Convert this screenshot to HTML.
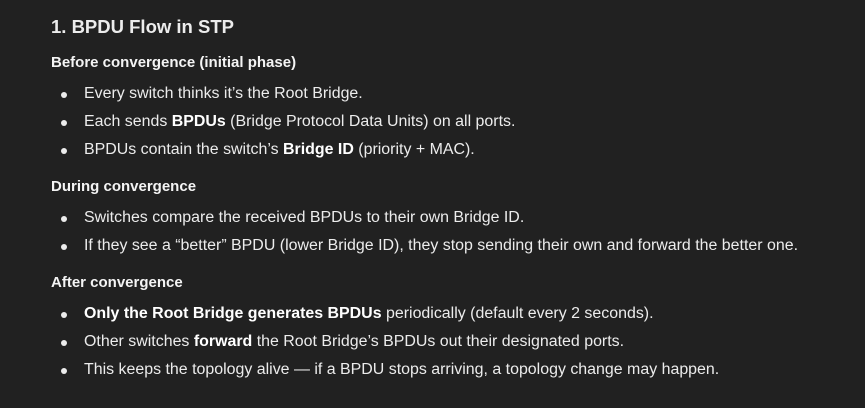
<!DOCTYPE html>
<html><head><style>
body{margin:0;background:#212121;width:865px;height:408px;overflow:hidden;font-family:"Liberation Sans",sans-serif;color:#ececec;position:relative}
.t{position:absolute;left:51px;white-space:nowrap}
h1{font-size:18.5px;font-weight:bold;margin:0;top:16px}
.h{font-size:15px;font-weight:bold;color:#f4f4f4}
.b{left:84px;font-size:15.94px}
.b:before{content:"";position:absolute;left:-23px;top:7px;width:6px;height:6px;border-radius:50%;background:#ececec}
b{color:#fff}
</style></head><body>
<h1 class="t">1. BPDU Flow in STP</h1>
<div class="t h" style="top:54px">Before convergence (initial phase)</div>
<div class="t b" style="top:85px">Every switch thinks it’s the Root Bridge.</div>
<div class="t b" style="top:113px">Each sends <b>BPDUs</b> (Bridge Protocol Data Units) on all ports.</div>
<div class="t b" style="top:141px">BPDUs contain the switch’s <b>Bridge ID</b> (priority + MAC).</div>
<div class="t h" style="top:178px">During convergence</div>
<div class="t b" style="top:209px">Switches compare the received BPDUs to their own Bridge ID.</div>
<div class="t b" style="top:237px">If they see a “better” BPDU (lower Bridge ID), they stop sending their own and forward the better one.</div>
<div class="t h" style="top:274px">After convergence</div>
<div class="t b" style="top:305px"><b>Only the Root Bridge generates BPDUs</b> periodically (default every 2 seconds).</div>
<div class="t b" style="top:333px">Other switches <b>forward</b> the Root Bridge’s BPDUs out their designated ports.</div>
<div class="t b" style="top:361px">This keeps the topology alive — if a BPDU stops arriving, a topology change may happen.</div>
</body></html>
